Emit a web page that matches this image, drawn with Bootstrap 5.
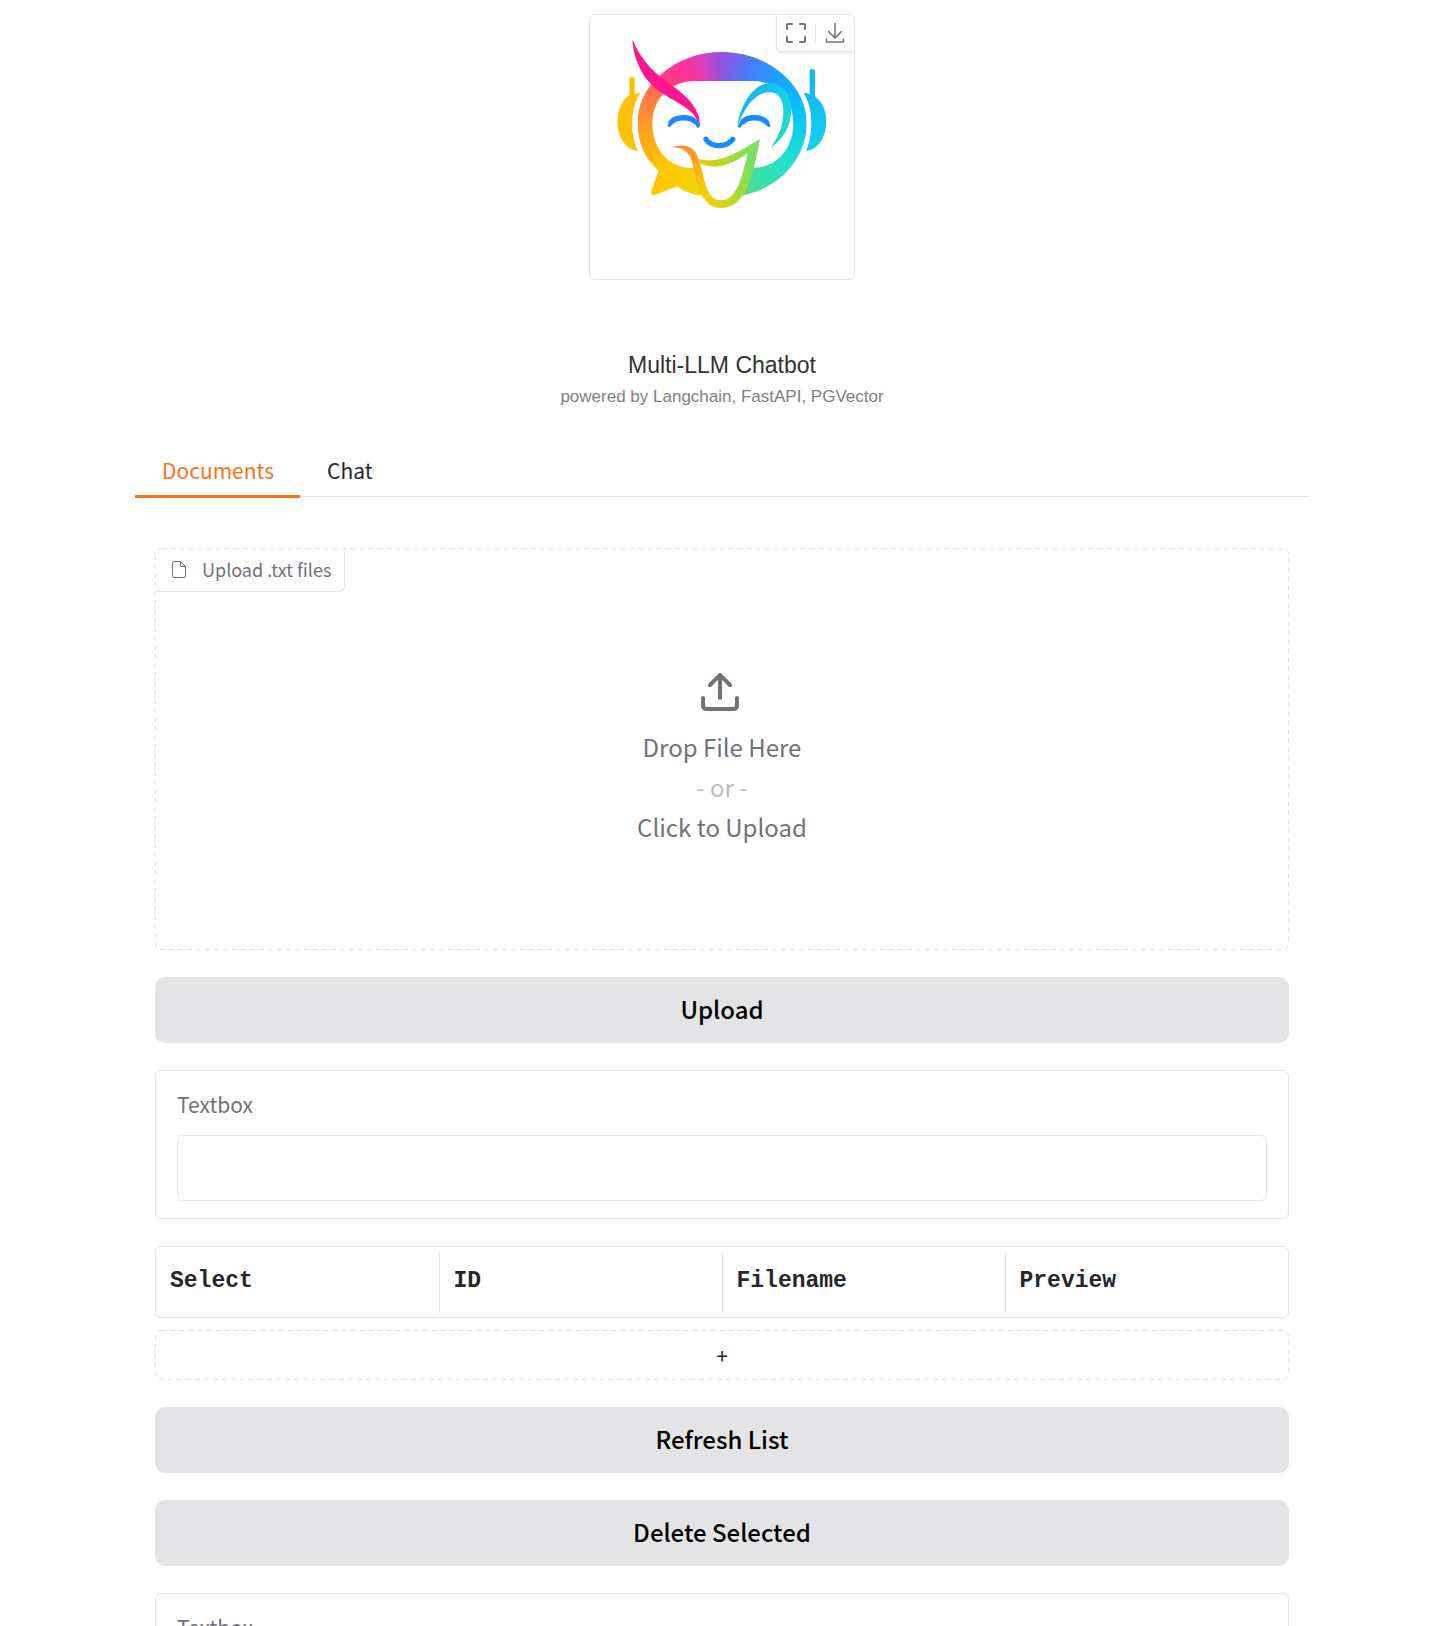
<!DOCTYPE html>
<html lang="en">
<head>
<meta charset="utf-8">
<meta name="viewport" content="width=device-width, initial-scale=1">
<title>Multi-LLM Chatbot</title>
<link href="https://cdn.jsdelivr.net/npm/bootstrap@5.3.0/dist/css/bootstrap.min.css" rel="stylesheet">
<style>
:root { --line: #e4e4e7; --muted: #71717a; --ink: #27272a; --accent: #f97316; }
body { font-family: "Noto Sans CJK SC", sans-serif; color: var(--ink); background: #fff; font-size: 21px; }
.app-shell { padding: 14px 128px 27px 135px; }
.logo-frame { width: 266px; height: 266px; border: 1px solid var(--line); border-radius: 6px; overflow: hidden; }
.logo-art { width: 264px; height: 264px; display: block; }
.tool-strip { top: 0; right: 0; width: 78px; height: 37px; padding: 0 8px; background: #fff; border: 1px solid var(--line); border-width: 0 0 1px 1px; border-bottom-left-radius: 5px; box-shadow: 0 1px 3px rgba(0,0,0,.1); }
.tool-strip button { width: 22px; height: 24px; color: var(--muted); line-height: 0; }
.tool-rule { width: 1px; height: 19px; background: var(--line); }
.app-title { font: 23px/30px "Liberation Sans", Arial, sans-serif; color: #333; margin: 70px 0 0; }
.app-sub { font: 17px/24px "Liberation Sans", Arial, sans-serif; color: #808080; margin: 5px 0 0; }
.tab-row { margin-top: 35px; height: 53px; border-bottom: 1px solid var(--line); }
.tab-row .nav-link { height: 54px; padding: 0 26px 0 27px; line-height: 53px; border: 0; border-bottom: 3px solid transparent; border-radius: 0; color: var(--ink); margin-bottom: -1px; background: none; }
.tab-row .nav-link.active { color: var(--accent); border-bottom-color: var(--accent); background: none; }
.pane { padding: 51px 20px 0; gap: 27px; }
.dash-frame { inset: 0; width: 100%; height: 100%; pointer-events: none; }
.dash-frame rect { width: calc(100% - 1px); height: calc(100% - 1px); fill: none; stroke: #dfdfe2; stroke-dasharray: 5 4; }
.drop-area { height: 402px; border: 0; color: var(--muted); font-size: 24px; line-height: 40px; cursor: pointer; padding-top: 23px; }
.drop-glyph { margin: 0 4px 16px 0; }
.drop-or { color: #bbbbc2; }
.drop-tag { top: 1px; left: 1px; height: 43px; padding: 0 13px 2px 16px; gap: 16px; font-size: 18px; line-height: 40px; border: 1px solid var(--line); border-width: 0 1px 1px 0; border-radius: 0 0 6px 0; }
.btn-soft { height: 66px; border: 0; border-radius: 10px; background: #e4e4e7; color: #000; font-size: 24px; font-weight: 500; line-height: 36px; padding: 0 0 3px; }
.btn-soft:hover { background: #d9d9dd; }
.field-card { border: 1px solid var(--line); border-radius: 6px; padding: 20px 21px 17px; }
.field-card label { color: var(--muted); line-height: 27px; margin-bottom: 17px; }
.field-card input { height: 66px; border-color: var(--line); border-radius: 6px; }
.grid-box { border: 1px solid var(--line); border-radius: 6px; height: 72px; padding: 4px 0; }
.grid-box table { height: 62px; table-layout: fixed; font: bold 23px/30px "Liberation Mono", monospace; color: var(--ink); }
.grid-box th { padding: 0 14px 2px; border-left: 1px solid var(--line); }
.grid-box th:first-child { border-left: 0; }
.add-row { height: 50px; border: 0; background: #fff; color: var(--ink); line-height: 30px; margin-top: 12px; padding: 0; }
</style>
<script src="https://cdn.jsdelivr.net/npm/bootstrap@5.3.0/dist/js/bootstrap.bundle.min.js"></script>
</head>
<body>
<div class="container-fluid app-shell">
  <header class="text-center">
    <div class="logo-frame position-relative mx-auto">
      <svg class="logo-art" viewBox="30 30 792 792" role="img" aria-label="Smiling chatbot logo">
        <defs>
          <clipPath id="ring"><path clip-rule="evenodd" d="M425 141C500 141 565 168 612 211C655 250 680 300 680 355C680 450 610 550 480 573L365 573C335 568 310 559 292 544L226 569Q213 573 213 560L236 497C195 462 173 415 173 355C173 300 195 250 240 211C290 165 355 141 425 141ZM347 228C265 228 217 285 217 357C217 430 265 489 335 489L516 489C595 489 640 425 640 357C640 285 600 228 516 228Z"/></clipPath>
          <linearGradient id="lip" gradientUnits="userSpaceOnUse" x1="350" y1="490" x2="530" y2="440"><stop stop-color="#f2c80c"/><stop offset=".45" stop-color="#b4d91e"/><stop offset="1" stop-color="#76df62"/></linearGradient>
          <linearGradient id="tongue" gradientUnits="userSpaceOnUse" x1="365" y1="560" x2="520" y2="480"><stop stop-color="#f7d000"/><stop offset=".45" stop-color="#b6dc28"/><stop offset="1" stop-color="#76df62"/></linearGradient>
          <linearGradient id="cheek" gradientUnits="userSpaceOnUse" x1="310" y1="425" x2="370" y2="570"><stop stop-color="#ff8f35"/><stop offset=".5" stop-color="#ffae18"/><stop offset="1" stop-color="#f7d000"/></linearGradient>
          <linearGradient id="swirl" gradientUnits="userSpaceOnUse" x1="480" y1="300" x2="620" y2="400"><stop stop-color="#16b4f2"/><stop offset=".5" stop-color="#14cdea"/><stop offset="1" stop-color="#27ddc4"/></linearGradient>
          <linearGradient id="earR" x1="0" y1="0" x2="0" y2="1"><stop stop-color="#0fb4f8"/><stop offset="1" stop-color="#12d2ec"/></linearGradient>
        </defs>
        <g clip-path="url(#ring)"><foreignObject x="160" y="130" width="530" height="450"><div class="h-100" style="background:conic-gradient(from 0deg at 265px 225px,#9550e2 0deg,#7264ee 12deg,#4b7bfb 26deg,#1aa3ff 52deg,#08c0fb 78deg,#12d2e6 100deg,#28dfc8 122deg,#45e09a 155deg,#a3da40 178deg,#e8d50d 200deg,#ffcb00 215deg,#ffc400 238deg,#ff9b25 268deg,#ff744a 294deg,#ff3a85 310deg,#fb339f 328deg,#d940bc 342deg,#9550e2 360deg)"></div></foreignObject></g>
        <path fill="#fff" d="M345 474L505 440L485 575C440 612 400 610 364 575Z"/>
        <path fill="url(#tongue)" d="M342 483L360 474C374 520 378 586 423 586C470 586 485 520 503 445L540 402C520 500 502 609 423 609C361 609 355 530 342 483Z"/>
        <path fill="url(#lip)" d="M355 461C412 478 462 450 540 402L503 445C450 482 400 498 360 474Z"/>
        <path fill="url(#cheek)" d="M274 427C315 413 345 425 356 461C366 500 370 540 388 568L370 580C350 550 347 515 338 478C329 440 309 427 274 427Z"/>
        <path fill="url(#swirl)" d="M472 366C478 310 515 236 570 235C608 235 634 267 634 315C633 365 607 407 572 427C600 391 611 354 610 315C609 280 594 262 568 262C524 262 492 310 472 366Z"/>
        <path fill="#ff168f" d="M157 103C180 157 209 188 238 213C268 238 304 258 329 287C351 312 362 340 359 367C351 327 322 309 284 287C249 266 222 252 197 219C172 184 159 143 157 103Z"/>
        <g fill="none" stroke="#168bff" stroke-linecap="round"><path stroke-width="10" d="M268 361C282 329 339 327 354 363M479 363C492 329 549 327 566 361"/><path stroke-width="16" d="M273 352C288 334 330 334 346 350M489 350C503 334 545 334 560 352M378 403C394 428 439 428 458 403"/></g>
        <path fill="#ffc107" d="M148 270V223A8 8 0 0 1 164 223V268Q172 263 181 264C149 312 150 386 174 439C98 426 96 304 148 270Z"/>
        <path fill="url(#earR)" d="M705 276V200A8 8 0 0 0 689 200V268Q681 263 671 264C701 312 700 386 678 439C751 426 757 306 705 276Z"/>
      </svg>
      <div class="tool-strip position-absolute d-flex align-items-center justify-content-between">
        <button class="btn p-0 border-0" type="button" aria-label="View full screen"><svg width="20" height="20" viewBox="0 0 20 20" fill="none" stroke="currentColor" stroke-width="2" stroke-linecap="round" stroke-linejoin="round"><path d="M1 6V2Q1 1 2 1H6M14 1H18Q19 1 19 2V6M19 14V18Q19 19 18 19H14M6 19H2Q1 19 1 18V14"/></svg></button>
        <span class="tool-rule"></span>
        <button class="btn p-0 border-0" type="button" aria-label="Download"><svg width="20" height="22" viewBox="0 0 20 22" fill="none" stroke="currentColor" stroke-width="1.5" stroke-linecap="round" stroke-linejoin="round"><path d="M10 1.5V15.5M3.5 9.5L10 16L16.500 9.500M1.500 17V20H18.500V17"/></svg></button>
      </div>
    </div>
    <h1 class="app-title">Multi-LLM Chatbot</h1>
    <p class="app-sub">powered by Langchain, FastAPI, PGVector</p>
  </header>

  <div class="nav tab-row" role="tablist">
    <button class="nav-link active" type="button" role="tab" aria-selected="true">Documents</button>
    <button class="nav-link" type="button" role="tab" aria-selected="false">Chat</button>
  </div>

  <main class="pane d-flex flex-column">
    <button type="button" class="drop-area position-relative d-flex flex-column align-items-center justify-content-center bg-white w-100">
      <svg class="dash-frame position-absolute" aria-hidden="true"><rect x=".5" y=".5" rx="6"/></svg>
      <span class="drop-tag position-absolute d-flex align-items-center">
        <svg width="14" height="17" viewBox="0 0 14 17" fill="none" stroke="currentColor" stroke-width="1" stroke-linejoin="round"><path d="M8.500 .5H2Q.5 .5 .5 2V15Q.5 16.500 2 16.500H12Q13.500 16.500 13.500 15V5.500ZM8.500 .5V5.500H13.500"/></svg>
        <span>Upload .txt files</span>
      </span>
      <svg class="drop-glyph" width="38" height="38" viewBox="0 0 38 38" fill="none" stroke="currentColor" stroke-width="4" stroke-linecap="round" stroke-linejoin="round"><path d="M19 25V2M9 12L19 2L29 12M2 25V32Q2 36 6 36H32Q36 36 36 32V25"/></svg>
      <span>Drop File Here</span>
      <span class="drop-or">- or -</span>
      <span>Click to Upload</span>
    </button>

    <button class="btn btn-soft w-100" type="button">Upload</button>

    <div class="field-card">
      <label class="d-block" for="upload-result">Textbox</label>
      <input class="form-control" id="upload-result" type="text">
    </div>

    <div>
      <div class="grid-box">
        <table class="w-100">
          <thead><tr><th scope="col">Select</th><th scope="col">ID</th><th scope="col">Filename</th><th scope="col">Preview</th></tr></thead>
        </table>
      </div>
      <button class="add-row position-relative d-block w-100" type="button" aria-label="Add row"><svg class="dash-frame position-absolute" aria-hidden="true"><rect x=".5" y=".5" rx="6"/></svg>+</button>
    </div>

    <button class="btn btn-soft w-100" type="button">Refresh List</button>
    <button class="btn btn-soft w-100" type="button">Delete Selected</button>

    <div class="field-card">
      <label class="d-block" for="delete-result">Textbox</label>
      <input class="form-control" id="delete-result" type="text">
    </div>
  </main>
</div>
</body>
</html>
